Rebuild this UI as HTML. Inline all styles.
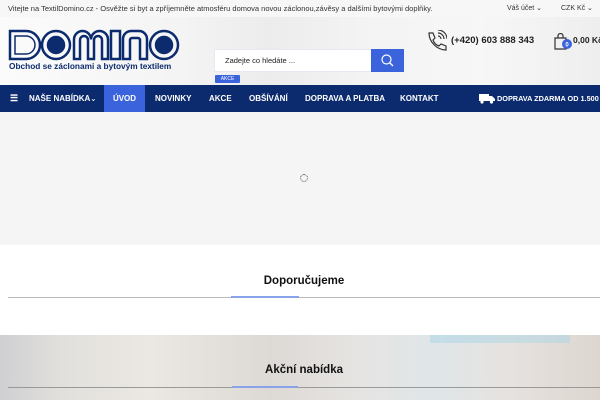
<!DOCTYPE html>
<html><head><meta charset="utf-8"><style>
*{margin:0;padding:0;box-sizing:border-box}
body{width:600px;height:400px;overflow:hidden;font-family:"Liberation Sans",sans-serif;background:#fff;position:relative}
.abs{position:absolute}
.top{top:0;left:0;width:600px;height:17px;background:#f7f7f7;font-size:7.5px;color:#333;line-height:17px}
.hdr{top:17px;left:0;width:600px;height:68px;background:linear-gradient(90deg,#fbfbfb 0%,#f4f4f4 30%,#ececec 45%,#f3f3f3 60%,#f7f7f7 80%,#eeeeee 100%)}
.nav{top:85px;left:0;width:600px;height:27px;background:#0c2b6e;color:#fff;font-size:8px;font-weight:bold;line-height:27px}
.nav span{position:absolute;top:0}
.gray{top:112px;left:0;width:600px;height:133px;background:#f5f5f5}
.h{font-size:11.5px;font-weight:bold;color:#111;text-align:center;width:140px}
</style></head><body>
<div class="abs top"><span style="position:absolute;left:8px">Vitejte na TextilDomino.cz - Osvěžte si byt a zpříjemněte atmosféru domova novou záclonou,závěsy a dalšími bytovými doplňky.</span><span style="position:absolute;left:507px;font-size:7px">Váš účet ⌄</span><span style="position:absolute;left:561px;font-size:7px">CZK Kč ⌄</span></div>
<div class="abs hdr"></div>
<svg class="abs" style="left:8px;top:29px" width="172" height="32" viewBox="0 0 172 32" fill="none" stroke="#0c2b6e" stroke-width="2.5">
<path d="M2 2h16a14 14 0 0 1 0 28H2z"/><path d="M7 7h11a9 9 0 0 1 0 18H7z" stroke-width="1.5"/>
<circle cx="48" cy="16" r="14"/><circle cx="48" cy="16" r="8" fill="#0c2b6e"/>
<path d="M66 30V10.5a8.5 8.5 0 0 1 17 0a8.5 8.5 0 0 1 17 0V30h-6V11a4 4 0 0 0-8 0v19h-6V11a4 4 0 0 0-8 0v19z"/>
<rect x="103" y="2" width="9" height="28"/>
<path d="M115 30V10a8 8 0 0 1 8-8h8a8 8 0 0 1 8 8v20h-7V11a2 2 0 0 0-2-2h-6a2 2 0 0 0-2 2v19z"/>
<circle cx="156" cy="16" r="14"/><circle cx="156" cy="16" r="8" fill="#0c2b6e"/>
</svg>
<div class="abs" style="left:9px;top:61px;font-size:8.3px;font-weight:bold;color:#0c2b6e">Obchod se záclonami a bytovým textilem</div>
<div class="abs" style="left:214px;top:49px;width:158px;height:23px;background:#fff;border:1px solid #ece6f2;font-size:7.5px;line-height:21px;padding-left:10px;color:#222">Zadejte co hledáte ...</div>
<div class="abs" style="left:371px;top:49px;width:33px;height:23px;background:#3a63dc"><svg width="33" height="23"><circle cx="15.5" cy="10.5" r="4.5" stroke="#fff" fill="none" stroke-width="1.2"/><path d="M19 14l3 3" stroke="#fff" stroke-width="1.3"/></svg></div>
<div class="abs" style="left:215px;top:75px;width:25px;height:8px;background:#3a63dc;color:#fff;font-size:5px;line-height:8px;text-align:center;border-radius:1px">AKCE</div>
<svg class="abs" style="left:425px;top:30px" width="22" height="22" viewBox="0 0 22 22" fill="none" stroke="#333" stroke-width="1.2"><path d="M4 3l4 0 2 5-2 2c1 3 3 5 6 6l2-2 5 2v4c-9 0-17-8-17-17z"/><path d="M13 3a6 6 0 0 1 6 6M13 6a3 3 0 0 1 3 3M13 0a9 9 0 0 1 9 9"/></svg>
<div class="abs" style="left:451px;top:35px;font-size:9.5px;font-weight:bold;color:#222">(+420) 603 888 343</div>
<svg class="abs" style="left:554px;top:33px" width="20" height="20"><path d="M1 5h11v11H1z" fill="none" stroke="#333" stroke-width="1.2"/><path d="M4 5V3a2.5 2.5 0 0 1 5 0v2" fill="none" stroke="#333" stroke-width="1.2"/><circle cx="13" cy="11" r="5" fill="#3a63dc"/><text x="13" y="13.5" font-size="6" fill="#fff" text-anchor="middle" font-family="Liberation Sans" font-weight="bold">0</text></svg>
<div class="abs" style="left:573px;top:35px;font-size:8.5px;font-weight:bold;color:#222;white-space:nowrap">0,00 Kč</div>
<div class="abs nav">
<span style="left:10px;font-size:9px">☰</span><span style="left:29px">NAŠE NABÍDKA</span><span style="left:90px;font-weight:normal">⌄</span>
<span style="left:104px;width:41px;height:27px;background:#3a63dc;text-align:center">ÚVOD</span>
<span style="left:155px">NOVINKY</span><span style="left:209px">AKCE</span><span style="left:249px">OBŠÍVÁNÍ</span><span style="left:305px">DOPRAVA A PLATBA</span><span style="left:400px">KONTAKT</span>
<svg style="position:absolute;left:479px;top:8px" width="16" height="11"><rect x="0" y="1" width="10" height="7" fill="#fff"/><path d="M10 3h3l3 3v2h-6z" fill="#fff"/><circle cx="3" cy="9" r="1.6" fill="#fff"/><circle cx="12.5" cy="9" r="1.6" fill="#fff"/></svg>
<span style="left:497px;white-space:nowrap;font-size:7.3px">DOPRAVA ZDARMA OD 1.500 Kč</span>
</div>
<div class="abs gray"></div>
<div class="abs" style="left:300px;top:174px;width:8px;height:8px;border:1.5px dotted #555;border-radius:50%"></div>
<div class="abs h" style="left:234px;top:275px">Doporučujeme</div>
<div class="abs" style="left:8px;top:297px;width:592px;height:1px;background:#bbb"></div>
<div class="abs" style="left:231px;top:296px;width:68px;height:2px;background:#8aa3e8"></div>
<div class="abs" style="left:0;top:335px;width:600px;height:65px;background:linear-gradient(90deg,#cfcfd2 0%,#e2e0dc 10%,#ebe8e3 25%,#ddd9d5 45%,#e6e4e2 60%,#dfe6e9 72%,#e6e2df 85%,#ddd6d0 100%)"></div>
<div class="abs" style="left:430px;top:335px;width:140px;height:8px;background:#a9d6e6;opacity:.5"></div>
<div class="abs h" style="left:234px;top:364px">Akční nabídka</div>
<div class="abs" style="left:8px;top:387px;width:592px;height:1px;background:#999"></div>
<div class="abs" style="left:232px;top:386px;width:66px;height:2px;background:#8aa3e8"></div>
</body></html>
